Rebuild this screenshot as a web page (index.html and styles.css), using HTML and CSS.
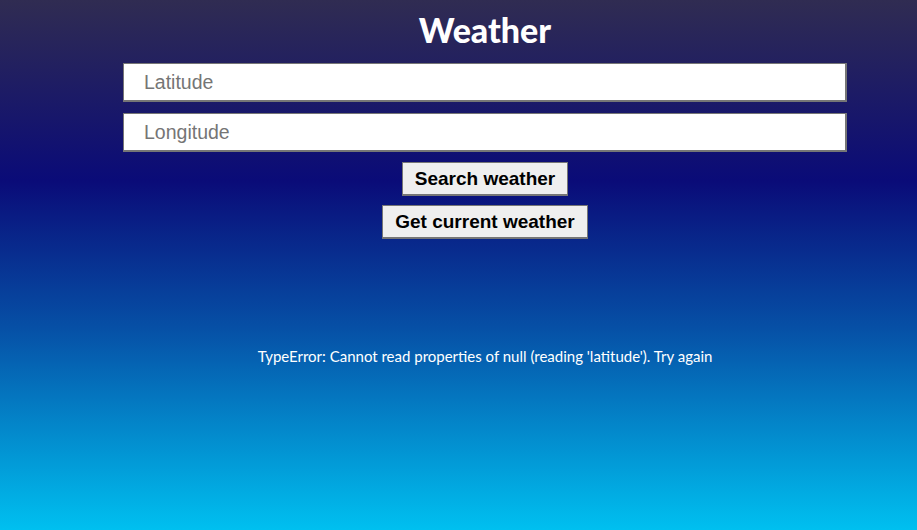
FILE: index.html
```html
<!DOCTYPE html>
<html lang="en">
<head>
    <meta charset="UTF-8">
    <meta name="viewport" content="width=device-width, initial-scale=1.0">
    <title>Weather</title>
    <link rel="stylesheet" href="styles.css">
</head>
<body>

<div class="app">
    <h1 class="title">Weather</h1>

    <!-- Coordinates form -->
    <form class="searchForm">
        <input type="text" class="coordInput" placeholder="Latitude">
        <input type="text" class="coordInput" placeholder="Longitude">
        <button type="button" class="actionButton">Search weather</button>
        <button type="button" class="actionButton">Get current weather</button>
    </form>

    <p class="errorText">TypeError: Cannot read properties of null (reading 'latitude'). Try again</p>
</div>

</body>
</html>
```

FILE: styles.css
```css
html, body {
    height: 100%;
}

body {
    margin: 0;
    background: linear-gradient(to bottom, #302c52 0%, #0a0b78 34%, #0650a6 62%, #00c0f0 100%);
    font-family: Lato, "Open Sans", sans-serif;
    color: white;
}

.app {
    width: 724px;
    margin-left: 123px;
    padding-top: 8px;
}

.title {
    margin: 0 0 12px 0;
    text-align: center;
    font-size: 34px;
    font-weight: 900;
    line-height: 43px;
}

.searchForm {
    display: flex;
    flex-direction: column;
    align-items: center;
}

.coordInput {
    box-sizing: border-box;
    width: 100%;
    height: 39px;
    margin-bottom: 11px;
    padding: 0 20px;
    border: 1px solid #767676;
    border-bottom-width: 2px;
    border-right-width: 2px;
    font-family: "Liberation Sans", Arial, sans-serif;
    font-size: 19.5px;
    background: white;
}

.coordInput::placeholder {
    color: #757575;
}

.coordInput + .coordInput {
    margin-bottom: 10px;
}

.actionButton {
    height: 34px;
    margin-bottom: 9px;
    padding: 0 12px;
    border: 1px solid #767676;
    border-bottom-width: 2px;
    background-color: #efefef;
    font-family: "Liberation Sans", Arial, sans-serif;
    font-size: 19px;
    font-weight: bold;
    color: black;
}

.errorText {
    margin: 99px 0 0 0;
    text-align: center;
    font-size: 15px;
}
```
